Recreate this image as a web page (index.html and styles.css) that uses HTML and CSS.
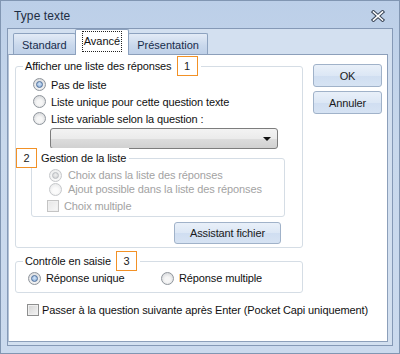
FILE: index.html
```html
<!DOCTYPE html>
<html lang="fr">
<head>
  <meta charset="UTF-8">
  <title>Type texte</title>
  <link rel="stylesheet" href="styles.css">
</head>
<body>
  <div class="window">
    <div class="titlebar">
      <span class="title">Type texte</span>
      <svg class="close" width="14" height="12" viewBox="0 0 14 12">
        <path d="M2.5 2 L11.5 10 M11.5 2 L2.5 10" stroke="#3a4658" stroke-width="3.6" stroke-linecap="square"/>
        <path d="M2.5 2 L11.5 10 M11.5 2 L2.5 10" stroke="#fff" stroke-width="1.6" stroke-linecap="square"/>
      </svg>
    </div>
    <div class="client">
      <div class="tabs">
        <div class="tab">Standard</div>
        <div class="tab active"><span class="focus">Avancé</span></div>
        <div class="tab">Présentation</div>
      </div>
      <div class="panel">
        <div class="main">
          <div class="group list-group">
            <div class="legend">
              <span>Afficher une liste des réponses</span>
              <span class="mark">1</span>
            </div>
            <div class="option"><span class="radio checked"></span>Pas de liste</div>
            <div class="option"><span class="radio"></span>Liste unique pour cette question texte</div>
            <div class="option"><span class="radio"></span>Liste variable selon la question :</div>
            <div class="select"><span class="arrow"></span></div>
            <div class="group sub-group">
              <div class="legend sub-legend">
                <span class="mark">2</span>
                <span>Gestion de la liste</span>
              </div>
              <div class="option sub-option disabled"><span class="radio checked"></span>Choix dans la liste des réponses</div>
              <div class="option sub-option disabled"><span class="radio"></span>Ajout possible dans la liste des réponses</div>
              <div class="option sub-check disabled"><span class="check"></span>Choix multiple</div>
            </div>
            <div class="button wizard">Assistant fichier</div>
          </div>
          <div class="group input-group">
            <div class="legend">
              <span>Contrôle en saisie</span>
              <span class="mark">3</span>
            </div>
            <div class="choice-row">
              <div class="option first"><span class="radio checked"></span>Réponse unique</div>
              <div class="option"><span class="radio"></span>Réponse multiple</div>
            </div>
          </div>
          <div class="option enter-row"><span class="check"></span>Passer à la question suivante après Enter (Pocket Capi uniquement)</div>
        </div>
        <div class="side">
          <div class="button">OK</div>
          <div class="button">Annuler</div>
        </div>
      </div>
    </div>
  </div>
</body>
</html>
```

FILE: styles.css
```css
body {
  margin: 0;
  font-family: "Liberation Sans", Arial, sans-serif;
  font-size: 11px;
  letter-spacing: -0.12px;
  color: #111;
}
.window {
  width: 400px;
  height: 354px;
  box-sizing: border-box;
  border: 1px solid #8196b2;
  background: linear-gradient(#bccfe8, #c8d8ec 40%, #cbdaee);
  display: flex;
  flex-direction: column;
}
.titlebar {
  height: 27px;
  display: flex;
  align-items: center;
  justify-content: space-between;
  padding: 0 14px 0 13px;
}
.title {
  font-size: 12px;
  letter-spacing: 0.1px;
  color: #1e2d42;
  margin-top: 2px;
}
.close {
  margin-top: 2px;
}
.client {
  flex: 1;
  margin: 0 6px 7px 6px;
  border: 1px solid #8599b6;
  background: #d3e0f0;
  padding: 0 4px 3px 0;
  display: flex;
  flex-direction: column;
}
.tabs {
  display: flex;
  padding-left: 5px;
  margin-bottom: -1px;
  height: 26px;
  align-items: flex-end;
}
.tab {
  height: 22px;
  box-sizing: border-box;
  padding: 0 8px;
  display: flex;
  align-items: center;
  border: 1px solid #8da2bf;
  border-bottom: none;
  border-radius: 2px 2px 0 0;
  background: linear-gradient(#e3ebf6, #c9d8ec 55%, #bdcfe7);
  color: #172c4b;
  margin-right: -1px;
  font-size: 11px;
  letter-spacing: 0;
}
.tab.active {
  height: 26px;
  background: #fff;
  position: relative;
  z-index: 1;
  padding: 0 6px 2px 6px;
  color: #111;
}
.focus {
  border: 1px dotted #222;
  padding: 3px 1px 4px 1px;
}
.panel {
  flex: 1;
  background: #fff;
  border: 1px solid #8c9fba;
  border-left-color: #b4c3d7;
  display: flex;
  gap: 10px;
  padding: 11px 0 0 6px;
}
.main {
  width: 288px;
}
.group {
  border: 1px solid #d5dde5;
  border-radius: 3px;
}
.legend {
  display: flex;
  align-items: center;
  gap: 5px;
  height: 20px;
  margin: -11px 0 0 7px;
  padding: 0 3px 0 2px;
  background: #fff;
  width: fit-content;
  color: #111;
}
.mark {
  width: 21px;
  height: 20px;
  box-sizing: border-box;
  border: 1px solid #f29126;
  display: flex;
  align-items: center;
  justify-content: center;
  color: #222;
}
.option {
  display: flex;
  align-items: center;
  height: 17px;
  gap: 5px;
  white-space: nowrap;
}
.list-group {
  padding-bottom: 3px;
}
.list-group > .option {
  padding-left: 17px;
}
.radio {
  width: 13px;
  height: 13px;
  box-sizing: border-box;
  border-radius: 50%;
  border: 1px solid #8f959c;
  background: radial-gradient(circle at 50% 60%, #f6f6f6 30%, #d2d4d7 90%);
  position: relative;
  flex: none;
}
.radio.checked::after {
  content: "";
  position: absolute;
  left: 2px;
  top: 2px;
  width: 7px;
  height: 7px;
  box-sizing: border-box;
  border-radius: 50%;
  border: 1px solid #4f6f9a;
  background: radial-gradient(circle at 50% 40%, #d6e6f7, #7ea5d4);
}
.check {
  width: 12px;
  height: 12px;
  box-sizing: border-box;
  border: 1px solid #8e8f8f;
  background: linear-gradient(135deg, #d4d4d4, #f4f4f4);
  box-shadow: inset 0 0 0 1px #f0f0f0;
  flex: none;
}
.select {
  margin: 1px 0 0 34px;
  width: 228px;
  height: 21px;
  box-sizing: border-box;
  border: 1px solid #7d7d7d;
  border-radius: 3px;
  background: linear-gradient(#f3f3f3, #ebebeb 50%, #dddddd 51%, #d1d1d1);
  display: flex;
  align-items: center;
  justify-content: flex-end;
  padding-right: 6px;
}
.arrow {
  width: 0;
  height: 0;
  border-left: 4px solid transparent;
  border-right: 4px solid transparent;
  border-top: 4px solid #111;
}
.sub-group {
  margin: 9px 0 0 15px;
  width: 254px;
  box-sizing: border-box;
  padding-bottom: 3px;
}
.sub-legend {
  margin: -11px 0 0 -16px;
  padding: 0 3px 0 0;
  gap: 4px;
}
.sub-option {
  height: 14px;
  padding-left: 17px;
  gap: 6px;
}
.sub-check {
  height: 14px;
  margin-top: 3px;
  padding-left: 15px;
  gap: 5px;
}
.disabled {
  color: #a3a3a3;
}
.disabled .radio {
  border-color: #c6c8cb;
  background: radial-gradient(circle at 50% 60%, #fbfbfb 30%, #e6e7e8 90%);
}
.disabled .radio.checked::after {
  border-color: #b9bcc0;
  background: radial-gradient(circle at 50% 40%, #f0f0f0, #c9cbce);
}
.disabled .check {
  border-color: #c4c4c4;
  background: linear-gradient(135deg, #e6e6e6, #f8f8f8);
}
.button {
  height: 23px;
  box-sizing: border-box;
  border: 1px solid #a0b2c9;
  border-radius: 3px;
  background: linear-gradient(#e9f0f9, #dce7f5 50%, #d0def1 51%, #d6e3f3);
  display: flex;
  align-items: center;
  justify-content: center;
  color: #1a1a1a;
}
.wizard {
  width: 107px;
  height: 22px;
  margin: 5px 21px 0 auto;
}
.input-group {
  margin-top: 13px;
  padding-bottom: 7px;
}
.choice-row {
  display: flex;
  padding-left: 12px;
}
.choice-row .option {
  height: 14px;
}
.choice-row .first {
  width: 133px;
}
.enter-row {
  margin: 10px 0 0 12px;
  height: 14px;
  gap: 3px;
}
.side {
  display: flex;
  flex-direction: column;
  gap: 4px;
  width: 69px;
  margin-top: -2px;
}
```
